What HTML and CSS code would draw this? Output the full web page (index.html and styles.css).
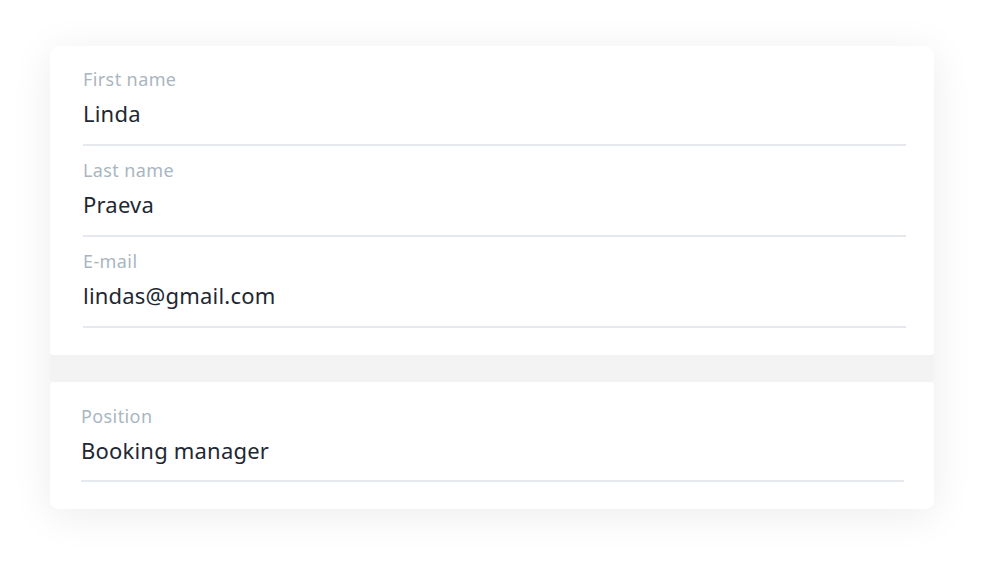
FILE: index.html
```html
<!DOCTYPE html>
<html>
<head>
<meta charset="utf-8">
<link rel="stylesheet" href="styles.css">
</head>
<body>
<div class="card">
  <section class="group group-main">
    <div class="field">
      <div class="label">First name</div>
      <div class="value">Linda</div>
    </div>
    <div class="field">
      <div class="label">Last name</div>
      <div class="value">Praeva</div>
    </div>
    <div class="field">
      <div class="label">E-mail</div>
      <div class="value">lindas@gmail.com</div>
    </div>
  </section>
  <div class="divider"></div>
  <section class="group group-extra">
    <div class="field">
      <div class="label">Position</div>
      <div class="value">Booking manager</div>
    </div>
  </section>
</div>
</body>
</html>
```

FILE: styles.css
```css
html, body {
  margin: 0;
  padding: 0;
  background: #ffffff;
}
body {
  padding: 46px 50px;
  font-family: "Noto Sans", "Open Sans", sans-serif;
}
.card {
  width: 884px;
  border-radius: 8px;
  background: #f3f3f3;
  box-shadow: 0 6px 40px rgba(0, 0, 0, 0.08);
}
.group {
  background: #ffffff;
}
.group-main {
  border-radius: 8px 8px 3px 3px;
  padding: 21px 28px 27px 33px;
}
.group-extra {
  border-radius: 3px 3px 8px 8px;
  padding: 22px 30px 27px 31px;
}
.divider {
  height: 27px;
}
.field {
  border-bottom: 2px solid #e5e9ee;
  padding-bottom: 16px;
}
.field + .field {
  margin-top: 12px;
}
.group-extra .field {
  padding-bottom: 15px;
}
.label {
  font-size: 18px;
  line-height: 24px;
  letter-spacing: 0.4px;
  color: #a9b6bf;
}
.value {
  font-size: 22px;
  line-height: 30px;
  letter-spacing: 0.2px;
  margin-top: 7px;
  color: #1e2833;
}
```
